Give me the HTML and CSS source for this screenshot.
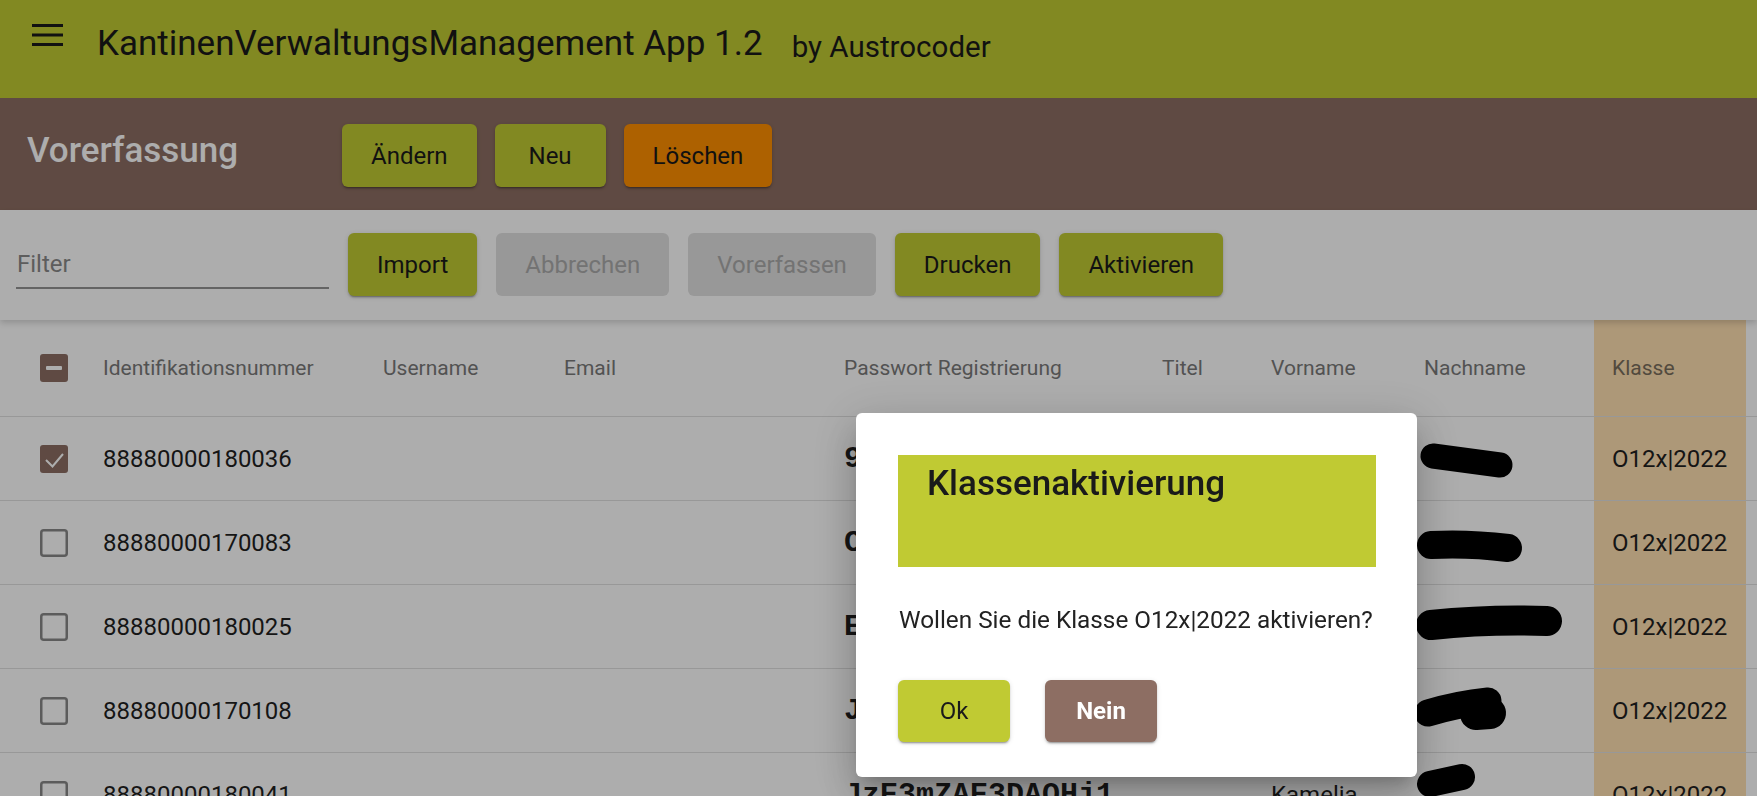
FILE: index.html
```html
<!DOCTYPE html>
<html lang="de">
<head>
    <meta charset="UTF-8">
    <meta name="viewport" content="width=device-width, initial-scale=1.0">
    <title>Vorerfassung</title>
    <link rel="stylesheet" href="styles.css">
</head>
<body>
    <header class="appbar">
        <svg class="menu-icon" width="31" height="22" viewBox="0 0 31 22">
            <rect y="0" width="31" height="3"/>
            <rect y="9.5" width="31" height="3"/>
            <rect y="19" width="31" height="3"/>
        </svg>
        <h1 class="app-title">KantinenVerwaltungsManagement App 1.2</h1>
        <span class="app-by">by Austrocoder</span>
    </header>

    <div class="pagebar">
        <h2 class="page-title">Vorerfassung</h2>
        <button class="btn btn-lime">Ändern</button>
        <button class="btn btn-lime">Neu</button>
        <button class="btn btn-orange">Löschen</button>
    </div>

    <div class="toolbar">
        <input class="filter" type="text" placeholder="Filter">
        <button class="btn btn-lime">Import</button>
        <button class="btn" disabled>Abbrechen</button>
        <button class="btn" disabled>Vorerfassen</button>
        <button class="btn btn-lime">Drucken</button>
        <button class="btn btn-lime">Aktivieren</button>
    </div>

    <div class="table">
        <div class="row head">
            <div class="cell check">
                <svg width="28" height="28" viewBox="0 0 28 28"><rect width="28" height="28" rx="3" fill="#8d6e63"/><rect x="6" y="12" width="16" height="4" rx="1" fill="#fff"/></svg>
            </div>
            <div class="cell">Identifikationsnummer</div>
            <div class="cell">Username</div>
            <div class="cell">Email</div>
            <div class="cell">Passwort Registrierung</div>
            <div class="cell">Titel</div>
            <div class="cell">Vorname</div>
            <div class="cell">Nachname</div>
            <div class="cell klasse">Klasse</div>
            <div class="cell"></div>
        </div>

        <div class="row">
            <div class="cell check">
                <svg width="28" height="28" viewBox="0 0 28 28"><rect width="28" height="28" rx="3" fill="#8d6e63"/><path d="M6 15l6.5 6.5L23 9" fill="none" stroke="#fff" stroke-width="2"/></svg>
            </div>
            <div class="cell">88880000180036</div>
            <div class="cell"></div>
            <div class="cell"></div>
            <div class="cell mono">9kT4wQ2mXr7LpZa</div>
            <div class="cell"></div>
            <div class="cell">Lukas</div>
            <div class="cell blot"><svg width="186" height="83"><path d="M25 39L92 48" stroke="#000" stroke-width="25" stroke-linecap="round"/></svg></div>
            <div class="cell klasse">O12x|2022</div>
            <div class="cell"></div>
        </div>

        <div class="row">
            <div class="cell check">
                <svg width="28" height="28" viewBox="0 0 28 28"><rect x="1.25" y="1.25" width="25.5" height="25.5" rx="2.5" fill="none" stroke="#888" stroke-width="2.5"/></svg>
            </div>
            <div class="cell">88880000170083</div>
            <div class="cell"></div>
            <div class="cell"></div>
            <div class="cell mono">Cw8PqR3nVb5YtHe</div>
            <div class="cell"></div>
            <div class="cell">Sophie</div>
            <div class="cell blot"><svg width="186" height="83"><path d="M23 44Q60 42 100 47" fill="none" stroke="#000" stroke-width="28" stroke-linecap="round"/></svg></div>
            <div class="cell klasse">O12x|2022</div>
            <div class="cell"></div>
        </div>

        <div class="row">
            <div class="cell check">
                <svg width="28" height="28" viewBox="0 0 28 28"><rect x="1.25" y="1.25" width="25.5" height="25.5" rx="2.5" fill="none" stroke="#888" stroke-width="2.5"/></svg>
            </div>
            <div class="cell">88880000180025</div>
            <div class="cell"></div>
            <div class="cell"></div>
            <div class="cell mono">E5xNm2KdQ8sRjW4</div>
            <div class="cell"></div>
            <div class="cell">Jonas</div>
            <div class="cell blot"><svg width="186" height="83"><path d="M23 40Q80 34 139 36" fill="none" stroke="#000" stroke-width="30" stroke-linecap="round"/></svg></div>
            <div class="cell klasse">O12x|2022</div>
            <div class="cell"></div>
        </div>

        <div class="row">
            <div class="cell check">
                <svg width="28" height="28" viewBox="0 0 28 28"><rect x="1.25" y="1.25" width="25.5" height="25.5" rx="2.5" fill="none" stroke="#888" stroke-width="2.5"/></svg>
            </div>
            <div class="cell">88880000170108</div>
            <div class="cell"></div>
            <div class="cell"></div>
            <div class="cell mono">J7bLc4TfZ9uMa2X</div>
            <div class="cell"></div>
            <div class="cell">Lena</div>
            <div class="cell blot"><svg width="186" height="83"><path d="M20 44Q50 35 80 32" fill="none" stroke="#000" stroke-width="27" stroke-linecap="round"/><path d="M68 45L82 44" stroke="#000" stroke-width="32" stroke-linecap="round"/></svg></div>
            <div class="cell klasse">O12x|2022</div>
            <div class="cell"></div>
        </div>

        <div class="row">
            <div class="cell check">
                <svg width="28" height="28" viewBox="0 0 28 28"><rect x="1.25" y="1.25" width="25.5" height="25.5" rx="2.5" fill="none" stroke="#888" stroke-width="2.5"/></svg>
            </div>
            <div class="cell">88880000180041</div>
            <div class="cell"></div>
            <div class="cell"></div>
            <div class="cell mono">JzE3mZAE3DAQHj1</div>
            <div class="cell"></div>
            <div class="cell">Kamelia</div>
            <div class="cell blot"><svg width="186" height="83"><path d="M22 31L54 24" stroke="#000" stroke-width="26" stroke-linecap="round"/></svg></div>
            <div class="cell klasse">O12x|2022</div>
            <div class="cell"></div>
        </div>
    </div>

    <!-- Dialog zur Klassenaktivierung -->
    <div class="backdrop">
        <div class="dialog">
            <div class="dialog-title">Klassenaktivierung</div>
            <p class="dialog-text">Wollen Sie die Klasse O12x|2022 aktivieren?</p>
            <div class="dialog-actions">
                <button class="btn btn-ok">Ok</button>
                <button class="btn btn-nein">Nein</button>
            </div>
        </div>
    </div>
</body>
</html>
```

FILE: styles.css
```css
html {
    overflow: hidden;
}
body {
    margin: 0;
    font-family: Roboto, "Liberation Sans", sans-serif;
    background-color: #fff;
    color: #1f1f1f;
    overflow: hidden;
    height: 796px;
}
.appbar {
    display: flex;
    align-items: flex-start;
    height: 98px;
    box-sizing: border-box;
    padding: 24px 0 0 32px;
    background-color: #c0ca33;
    color: #1a1a1a;
}
.menu-icon {
    fill: #1a1a1a;
}
.app-title {
    margin: 0 0 0 34px;
    font-size: 35px;
    font-weight: 400;
    line-height: 40px;
}
.app-by {
    margin: 3px 0 0 29px;
    font-size: 29.5px;
    line-height: 40px;
}
.pagebar {
    display: flex;
    align-items: flex-start;
    gap: 18px;
    height: 112px;
    box-sizing: border-box;
    padding: 26px 0 0 27px;
    background-color: #8d6e63;
}
.page-title {
    width: 297px;
    margin: 6px 0 0;
    font-size: 35px;
    font-weight: 500;
    line-height: 42px;
    color: #fff;
}
.btn {
    height: 63px;
    min-width: 111px;
    padding: 0 29px;
    border: none;
    border-radius: 6px;
    font-family: Roboto, "Liberation Sans", sans-serif;
    font-size: 24px;
    color: #1a1a1a;
    background-color: #e0e0e0;
    cursor: pointer;
}
.btn:disabled {
    color: #aaa;
    cursor: default;
}
.btn-lime,
.btn-orange,
.btn-ok,
.btn-nein {
    box-shadow: 0 3px 1px -2px rgba(0,0,0,0.2), 0 2px 2px 0 rgba(0,0,0,0.14), 0 1px 5px 0 rgba(0,0,0,0.12);
}
.btn-lime {
    background-color: #c0ca33;
}
.btn-orange {
    background-color: #ff8f00;
}
.toolbar {
    position: relative;
    display: flex;
    align-items: flex-start;
    gap: 19px;
    height: 110px;
    box-sizing: border-box;
    padding: 23px 0 0 16px;
    background-color: #fff;
    box-shadow: 0 3px 6px rgba(0,0,0,0.16);
}
.filter {
    width: 313px;
    height: 49px;
    margin-top: 7px;
    padding: 0 0 0 1px;
    box-sizing: border-box;
    border: none;
    border-bottom: 2px solid #949494;
    font-family: Roboto, "Liberation Sans", sans-serif;
    font-size: 24px;
    background: transparent;
    outline: none;
}
.filter::placeholder {
    color: #8a8a8a;
}
.table {
    background-color: #fff;
}
.row {
    display: grid;
    grid-template-columns: 87px 280px 181px 280px 318px 109px 153px 186px 152px 1fr;
    height: 84px;
    box-sizing: border-box;
    border-bottom: 1px solid #e0e0e0;
    font-size: 24px;
}
.row.head {
    height: 97px;
    font-size: 21px;
    font-weight: 400;
    color: #7a7a7a;
}
.cell {
    display: flex;
    align-items: center;
    padding-left: 16px;
    white-space: nowrap;
    overflow: hidden;
}
.cell.check {
    padding-left: 40px;
}
.cell.klasse {
    padding-left: 18px;
    background-color: #ffe0b2;
}
.row.head .cell.klasse {
    color: #7a6e5c;
}
.cell.mono {
    font-family: "Liberation Mono", monospace;
    font-size: 30px;
    font-weight: bold;
}
.cell.blot {
    padding-left: 0;
}
.cell.blot svg {
    display: block;
}
.backdrop {
    position: fixed;
    inset: 0;
    background-color: rgba(0,0,0,0.32);
}
.dialog {
    position: absolute;
    left: 856px;
    top: 413px;
    width: 561px;
    height: 364px;
    box-sizing: border-box;
    padding: 42px 41px 34px 42px;
    background-color: #fff;
    border-radius: 6px;
    box-shadow: 0 11px 15px -7px rgba(0,0,0,0.2), 0 24px 38px 3px rgba(0,0,0,0.14), 0 9px 46px 8px rgba(0,0,0,0.12);
}
.dialog-title {
    height: 112px;
    box-sizing: border-box;
    padding: 9px 29px;
    background-color: #c0ca33;
    font-size: 35px;
    font-weight: 500;
    line-height: 40px;
    color: #1a1a1a;
}
.dialog-text {
    margin: 39px 0 0 1px;
    font-size: 24.3px;
    line-height: 28px;
    white-space: nowrap;
    color: #222;
}
.dialog-actions {
    display: flex;
    gap: 35px;
    margin-top: 46px;
}
.btn-ok {
    width: 112px;
    height: 62px;
    padding: 0;
    background-color: #c0ca33;
}
.btn-nein {
    width: 112px;
    height: 62px;
    padding: 0;
    background-color: #8d6e63;
    color: #fff;
    font-weight: bold;
}
```
